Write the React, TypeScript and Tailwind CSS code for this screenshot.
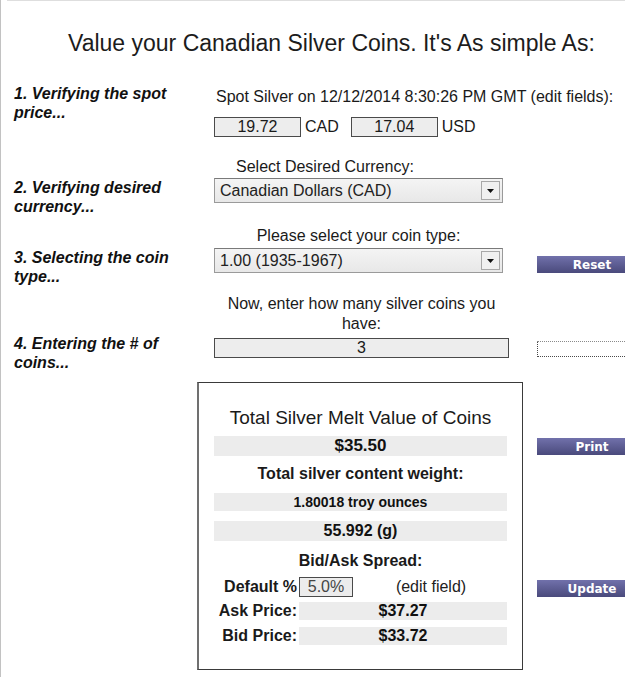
const labelCls =
  "w-[213px] shrink-0 pl-[13px] text-[16px] leading-[19px] font-bold italic text-[#111]";

const NavButton = ({ label, className = "" }: { label: string; className?: string }) => {
  return (
    <div
      className={`w-[110px] h-[17px] flex items-center justify-center bg-linear-to-b from-[#7171ab] to-[#4a4a7c] text-white text-[12px] font-bold font-['DejaVu_Sans',sans-serif] ${className}`}
    >
      {label}
    </div>
  );
};

const FakeSelect = ({ value }: { value: string }) => {
  return (
    <div className="w-[289px] h-[25px] border border-[#9a9a9a] border-t-[#7a7a7a] bg-linear-to-b from-[#f4f4f4] to-[#e8e8e8] flex items-center justify-between pl-[5px] pr-[2px]">
      <span className="text-[16px] text-[#222]">{value}</span>
      <div className="w-[19px] h-[19px] border border-[#a8a8a8] bg-[#f0f0f0] flex items-center justify-center">
        <svg width="7" height="4" viewBox="0 0 7 4">
          <path d="M0 0 L7 0 L3.5 4 Z" fill="#111" />
        </svg>
      </div>
    </div>
  );
};

const GrayBar = ({ children, className = "" }: { children: React.ReactNode; className?: string }) => {
  return (
    <div className={`bg-[#ececec] flex items-center justify-center font-bold text-[#111] ${className}`}>
      {children}
    </div>
  );
};

const App = () => {
  return (
    <div className="relative w-[625px] h-[677px] overflow-hidden bg-white border-l border-[#c2c2c2] font-['Liberation_Sans',Arial,sans-serif] text-[#1a1a1a]">
      <div className="ml-[6px] h-px bg-[#dedede]" />

      <h1 className="mt-[29px] pl-[67px] text-[23px] leading-[26px] whitespace-nowrap text-[#1c1c1c]">
        Value your Canadian Silver Coins. It's As simple As:
      </h1>

      {/* 1 */}
      <div className="flex h-[79px] items-start">
        <div className={`${labelCls} mt-[28px]`}>
          1. Verifying the spot
          <br />
          price...
        </div>
        <div className="mt-[32px] flex flex-col">
          <p className="text-[16px] leading-[18px] whitespace-nowrap pl-[2px]">
            Spot Silver on 12/12/2014 8:30:26 PM GMT (edit fields):
          </p>
          <div className="mt-[9px] flex items-center text-[16px]">
            <div className="w-[87px] h-[20px] border border-[#4a4a4a] bg-[#ededed] flex items-center justify-center">
              19.72
            </div>
            <span className="ml-[4px]">CAD</span>
            <div className="ml-[12px] w-[87px] h-[20px] border border-[#4a4a4a] bg-[#ededed] flex items-center justify-center">
              17.04
            </div>
            <span className="ml-[4px]">USD</span>
          </div>
        </div>
      </div>

      {/* 2 */}
      <div className="flex h-[77px] items-start">
        <div className={`${labelCls} mt-[43px]`}>
          2. Verifying desired
          <br />
          currency...
        </div>
        <div className="mt-[23px] flex flex-col">
          <p className="text-[16px] leading-[18px] pl-[22px]">Select Desired Currency:</p>
          <div className="mt-[2px]">
            <FakeSelect value="Canadian Dollars (CAD)" />
          </div>
        </div>
      </div>

      {/* 3 */}
      <div className="flex h-[78px] items-start">
        <div className={`${labelCls} mt-[36px]`}>
          3. Selecting the coin
          <br />
          type...
        </div>
        <div className="w-[323px] shrink-0 mt-[15px] flex flex-col">
          <p className="w-[289px] text-center text-[16px] leading-[18px]">
            Please select your coin type:
          </p>
          <div className="mt-[3px]">
            <FakeSelect value="1.00 (1935-1967)" />
          </div>
        </div>
        <NavButton label="Reset" className="mt-[44px] shrink-0" />
      </div>

      {/* 4 */}
      <div className="flex h-[92px] items-start">
        <div className={`${labelCls} mt-[44px]`}>
          4. Entering the # of
          <br />
          coins...
        </div>
        <div className="w-[323px] shrink-0 mt-[4px] flex flex-col">
          <p className="w-[295px] text-center text-[16px] leading-[20px]">
            Now, enter how many silver coins you have:
          </p>
          <div className="mt-[4px] w-[295px] h-[20px] border border-[#4a4a4a] bg-[#ededed] flex items-center justify-center text-[16px]">
            3
          </div>
        </div>
        <div className="mt-[51px] w-[110px] h-[16px] shrink-0 border border-dotted border-[#4a4a4a] border-t-[#8a8a8a] bg-white" />
      </div>

      {/* results */}
      <div className="flex items-start">
        <div className="ml-[196px] w-[326px] h-[288px] shrink-0 border border-[#3a3a3a] border-l-2 border-l-[#707070] px-[15px] flex flex-col">
          <p className="mt-[24px] text-center text-[19px] leading-[22px] whitespace-nowrap">
            Total Silver Melt Value of Coins
          </p>
          <GrayBar className="mt-[7px] h-[20px] text-[17px]">$35.50</GrayBar>
          <p className="mt-[8px] text-center text-[16px] leading-[20px] font-bold">
            Total silver content weight:
          </p>
          <GrayBar className="mt-[9px] h-[18px] text-[14px]">1.80018 troy ounces</GrayBar>
          <GrayBar className="mt-[10px] h-[20px] text-[16px]">55.992 (g)</GrayBar>
          <p className="mt-[10px] text-center text-[16px] leading-[20px] font-bold">
            Bid/Ask Spread:
          </p>
          <div className="mt-[6px] flex items-center h-[20px]">
            <span className="w-[84px] text-right text-[16px] font-bold pr-[1px]">Default %</span>
            <div className="ml-[1px] w-[54px] h-[20px] border border-[#4a4a4a] bg-[#ececec] flex items-center justify-center text-[16px] text-[#444]">
              5.0%
            </div>
            <span className="flex-1 text-center text-[16px] text-[#222] pl-[2px]">(edit field)</span>
          </div>
          <div className="mt-[5px] flex items-center h-[18px]">
            <span className="w-[84px] text-right text-[16px] font-bold pr-[1px]">Ask Price:</span>
            <GrayBar className="ml-[1px] flex-1 h-[18px] text-[16px]">$37.27</GrayBar>
          </div>
          <div className="mt-[7px] flex items-center h-[18px]">
            <span className="w-[84px] text-right text-[16px] font-bold pr-[1px]">Bid Price:</span>
            <GrayBar className="ml-[1px] flex-1 h-[18px] text-[16px]">$33.72</GrayBar>
          </div>
        </div>
        <div className="ml-[14px] shrink-0 flex flex-col">
          <NavButton label="Print" className="mt-[56px]" />
          <NavButton label="Update" className="mt-[125px]" />
        </div>
      </div>
    </div>
  );
};

export default App;
